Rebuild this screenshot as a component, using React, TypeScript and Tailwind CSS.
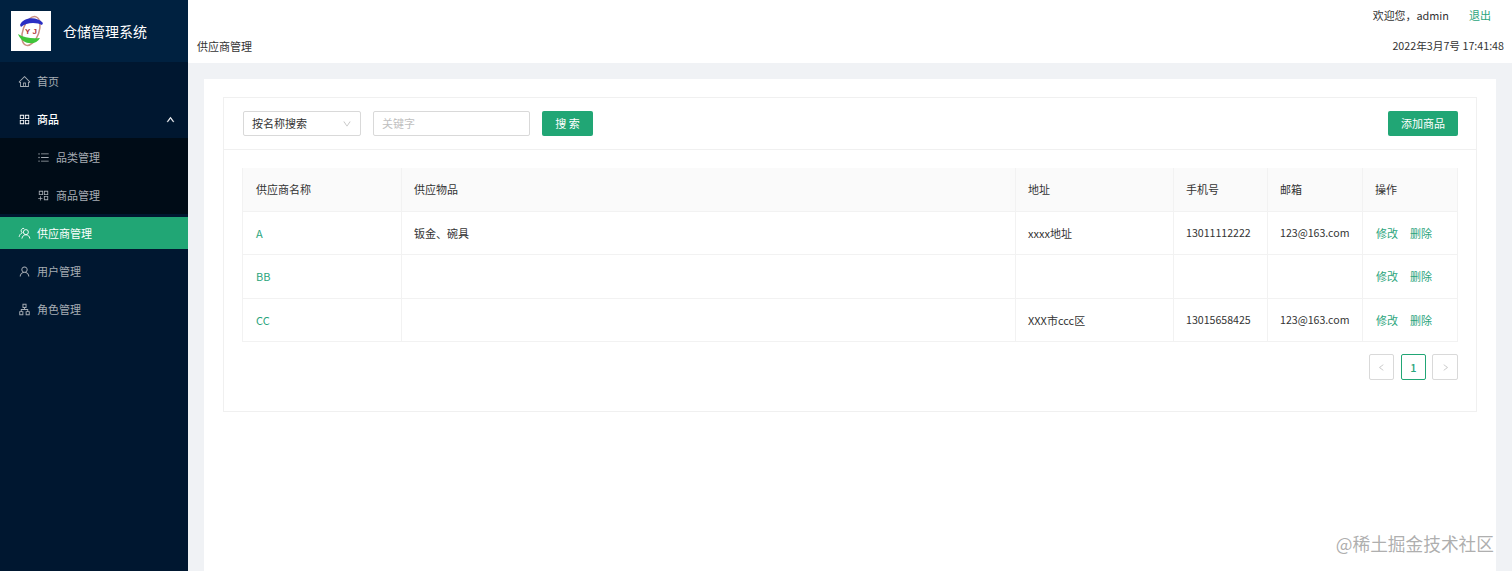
import { AiOutlineHome, AiOutlineAppstore, AiOutlineBars, AiOutlineAppstoreAdd, AiOutlineUser, AiOutlineApartment, AiOutlineUp, AiOutlineDown, AiOutlineLeft, AiOutlineRight } from "react-icons/ai";

const rows = [
    { name: "A", goods: "钣金、碗具", address: "xxxx地址", phone: "13011112222", email: "123@163.com" },
    { name: "BB", goods: "", address: "", phone: "", email: "" },
    { name: "CC", goods: "", address: "XXX市ccc区", phone: "13015658425", email: "123@163.com" },
];

const Logo = () => (
    <div className="w-10 h-10 bg-white shrink-0">
        <svg viewBox="0 0 40 40" className="w-10 h-10">
            <ellipse cx="20" cy="20" rx="8" ry="15" fill="none" stroke="#c98f82" strokeWidth="1.5" transform="rotate(20 20 20)" />
            <path d="M9 14 C12 6 26 5 32 12 L31 14 C26 11 15 11 10 16Z" fill="#2a2fc4" />
            <path d="M7 23 C13 27 22 28 29 27 C25 35 11 34 7 23Z" fill="#3fc43a" />
            <text x="20" y="23" textAnchor="middle" fontSize="8" fontWeight="700" fill="#b0353b" fontFamily="Liberation Sans, sans-serif">Y J</text>
        </svg>
    </div>
);

const SupplierIcon = () => (
    <svg viewBox="0 0 14 14" className="w-[13px] h-[13px]" fill="none" stroke="currentColor" strokeWidth="1">
        <circle cx="8.5" cy="5.5" r="2.7" />
        <path d="M4.2 12.5 C4.6 9.8 6.4 8.4 8.5 8.4 C10.6 8.4 12.4 9.8 12.8 12.5" />
        <path d="M6.6 1.6 C5 1.2 3.4 2.2 3.4 4 C3.4 5 3.9 5.8 4.6 6.2 C2.8 7 1.6 8.6 1.2 10.6" />
    </svg>
);

const MenuItem = ({ icon, label, bold, sub, active, arrow }: any) => (
    <div className="py-[3px]">
        <div className={`flex items-center h-8 text-[11px] ${sub ? "pl-[37px]" : "pl-[18px]"} ${active ? "bg-[#21a675] text-white" : bold ? "text-white" : "text-[#a6adb4]"}`}>
            <span className="w-[13px] mr-[6px] flex justify-center text-[13px]">{icon}</span>
            <span className={bold ? "font-medium" : ""}>{label}</span>
            {arrow && <AiOutlineUp className="ml-auto mr-[13px] text-[9px] text-white stroke-current stroke-[60]" />}
        </div>
    </div>
);

const Sidebar = () => (
    <div className="w-[188px] shrink-0 bg-[#001730] flex flex-col">
        <div className="h-[62px] flex items-center pl-[11px] bg-[#002140]">
            <Logo />
            <span className="ml-3 text-[14px] text-white">仓储管理系统</span>
        </div>
        <div>
            <MenuItem icon={<AiOutlineHome />} label="首页" />
            <MenuItem icon={<AiOutlineAppstore />} label="商品" bold arrow />
            <div className="bg-[#000c17]">
                <MenuItem icon={<AiOutlineBars />} label="品类管理" sub />
                <MenuItem icon={<AiOutlineAppstoreAdd />} label="商品管理" sub />
            </div>
            <MenuItem icon={<SupplierIcon />} label="供应商管理" active />
            <MenuItem icon={<AiOutlineUser />} label="用户管理" />
            <MenuItem icon={<AiOutlineApartment />} label="角色管理" />
        </div>
    </div>
);

const Header = () => (
    <div className="h-[63px] bg-white shrink-0 flex flex-col justify-between pb-[9px] pt-[7px] pl-[9px] pr-2">
        <div className="flex justify-end pr-3">
            <span className="text-[10.9px]">欢迎您，admin</span>
            <a className="ml-5 mr-[1px] text-[#2ba57c]">退出</a>
        </div>
        <div className="flex justify-between">
            <span>供应商管理</span>
            <span className="text-[10.7px]">2022年3月7号 17:41:48</span>
        </div>
    </div>
);

const cell = "border-r border-b border-[#f2f2f2] px-[12px] align-middle text-left font-normal";

const Table = () => (
    <table className="w-[1215px] table-fixed border-collapse">
        <colgroup>
            <col className="w-[159px]" />
            <col className="w-[614px]" />
            <col className="w-[158px]" />
            <col className="w-[94px]" />
            <col className="w-[95px]" />
            <col className="w-[95px]" />
        </colgroup>
        <thead>
            <tr className="h-[43px] bg-[#fafafa]">
                <th className={`${cell} border-l pl-[13px]`}>供应商名称</th>
                <th className={cell}>供应物品</th>
                <th className={cell}>地址</th>
                <th className={cell}>手机号</th>
                <th className={cell}>邮箱</th>
                <th className={cell}>操作</th>
            </tr>
        </thead>
        <tbody>
            {rows.map((r) => (
                <tr key={r.name} className="h-[43.5px]">
                    <td className={`${cell} border-l pl-[13px] text-[#2ba57c]`}>{r.name}</td>
                    <td className={cell}>{r.goods}</td>
                    <td className={cell}>{r.address}</td>
                    <td className={`${cell} text-[10.6px]`}>{r.phone}</td>
                    <td className={`${cell} text-[10.6px]`}>{r.email}</td>
                    <td className={`${cell} pl-[13px] text-[#2ba57c]`}>
                        <a className="mr-3">修改</a>
                        <a>删除</a>
                    </td>
                </tr>
            ))}
        </tbody>
    </table>
);

const Pagination = () => (
    <div className="flex justify-end mt-[12px]">
        <div className="w-[25px] h-[26px] mr-[7px] border border-[#d9d9d9] rounded-[2px] flex items-center justify-center text-[#c4c4c4] text-[9px]"><AiOutlineLeft /></div>
        <div className="w-[25px] h-[26px] mr-[6px] border border-[#21a675] rounded-[2px] flex items-center justify-center text-[#2ba57c] font-medium">1</div>
        <div className="w-[26px] h-[26px] border border-[#d9d9d9] rounded-[2px] flex items-center justify-center text-[#c4c4c4] text-[9px]"><AiOutlineRight /></div>
    </div>
);

const Card = () => (
    <div className="border border-[#f0f0f0] h-[315px]">
        <div className="h-[52px] flex items-center justify-between pl-[19px] pr-[18px] border-b border-[#f0f0f0]">
            <div className="flex items-center">
                <div className="w-[118px] h-[25px] border border-[#d9d9d9] rounded-[2px] flex items-center justify-between pl-[8px] pr-2">
                    <span>按名称搜索</span>
                    <AiOutlineDown className="text-[10px] text-[#bfbfbf]" />
                </div>
                <div className="w-[157px] h-[25px] ml-3 border border-[#d9d9d9] rounded-[2px] flex items-center pl-[8px] text-[#bfbfbf]">关键字</div>
                <button className="w-[51px] h-[25px] ml-3 bg-[#21a675] rounded-[2px] text-white">搜 索</button>
            </div>
            <button className="w-[70px] h-[25px] bg-[#21a675] rounded-[2px] text-white">添加商品</button>
        </div>
        <div className="px-[18px] pt-[18px]">
            <Table />
            <Pagination />
        </div>
    </div>
);

export default function App() {
    return (
        <div className="relative flex h-[571px] overflow-hidden bg-[#f0f2f5] text-[11px] text-[#333] font-['Noto_Sans_CJK_SC','Noto_Sans',sans-serif]">
            <Sidebar />
            <div className="flex-1 flex flex-col min-w-0">
                <Header />
                <div className="flex-1 mx-4 mt-4 bg-white pl-[19px] pr-[19px] pt-[18px]">
                    <Card />
                </div>
            </div>
            <div className="absolute right-[18px] bottom-[17px] text-[17.7px] leading-[22px] text-[#999]/80">@稀土掘金技术社区</div>
        </div>
    );
}
